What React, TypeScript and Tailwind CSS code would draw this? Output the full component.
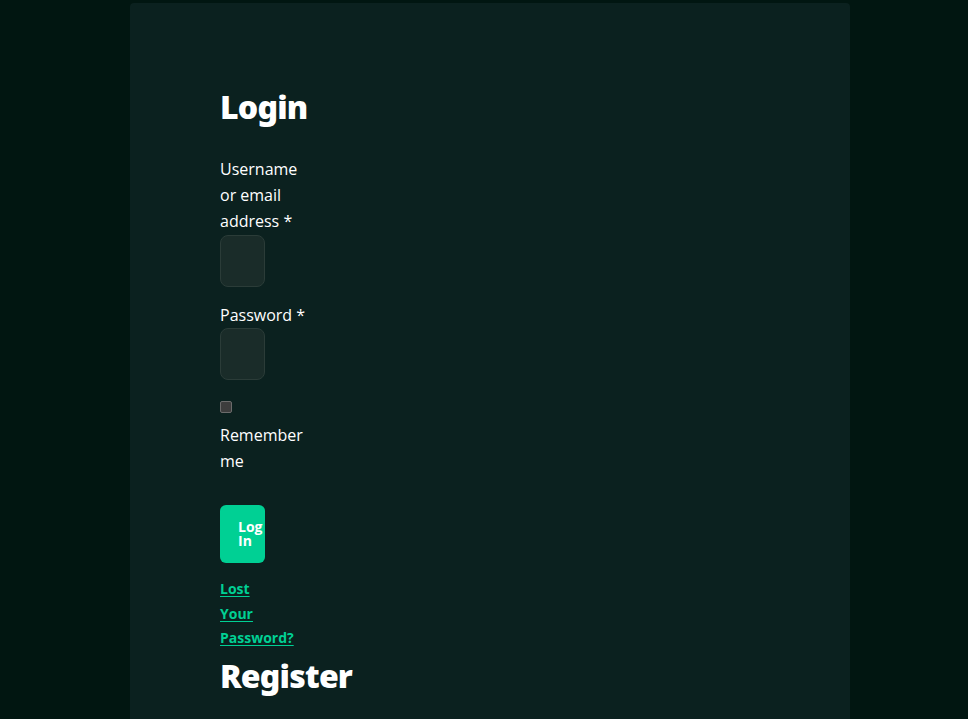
export default function App() {
  return (
    <div className="min-h-[719px] bg-[#011611] pl-[12px] pt-[3px] font-['Open_Sans',sans-serif] text-white">
      <div className="mx-auto min-h-[760px] w-[720px] rounded-[4px] bg-[#0b211f] px-[90px] pt-[85px]">
        <h2 className="font-['Noto_Sans',sans-serif] text-[32px] font-black leading-[38px] tracking-[-0.8px]">
          Login
        </h2>

        <form className="mt-[30px] w-[90px]" onSubmit={(e) => e.preventDefault()}>
          <label className="block text-[16px] leading-[26px]">
            Username or email address&nbsp;*
          </label>
          <input
            type="text"
            className="mt-[1px] block h-[52px] w-[45px] rounded-[8px] border border-[#2b3c38] bg-[#1a2c29] outline-none"
          />

          <label className="mt-[15px] block text-[16px] leading-[26px]">
            Password&nbsp;*
          </label>
          <input
            type="password"
            className="block h-[52px] w-[45px] rounded-[8px] border border-[#2b3c38] bg-[#1a2c29] outline-none"
          />

          <input
            type="checkbox"
            className="mt-[21px] block h-[12px] w-[12px] appearance-none rounded-[2px] border border-[#6b6b6b] bg-[#3d3d3d]"
          />
          <label className="mt-[9px] block text-[16px] leading-[26px]">Remember me</label>

          <button
            type="submit"
            className="mt-[31px] block h-[58px] w-[45px] rounded-[6px] bg-[#00d094] pl-[18px] text-left text-[14px] font-bold leading-[14px] text-white"
          >
            Log In
          </button>

          <div className="mt-[13px] w-[45px]">
            <a
              href="#"
              className="text-[14px] font-bold leading-[23.5px] text-[#00d094] underline underline-offset-2"
            >
              Lost Your Password?
            </a>
          </div>
        </form>

        <h2 className="mt-[7px] font-['Noto_Sans',sans-serif] text-[32px] font-black leading-[38px] tracking-[-0.8px]">
          Register
        </h2>
      </div>
    </div>
  )
}
